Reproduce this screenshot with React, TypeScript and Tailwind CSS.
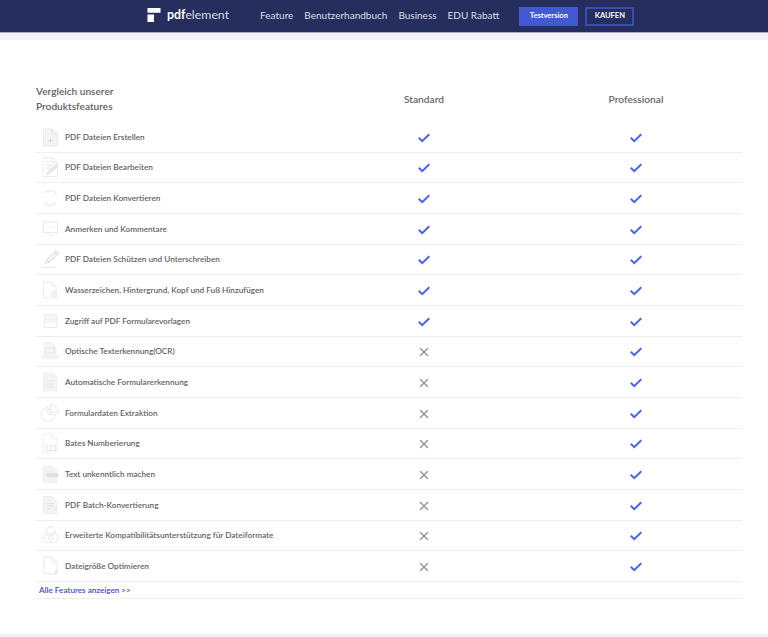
import { X } from 'lucide-react';
import type { ReactNode } from 'react';

const icons: Record<string, ReactNode> = {
  create: (
    <>
      <path d="M5.500 4h9l5 5v12h-14z" fill="#f4f4f4" stroke="#ececec" />
      <path d="M14.500 4v5h5" stroke="#e6e6e6" />
      <path d="M12.500 13v5M10 15.500h5" stroke="#dedede" />
    </>
  ),
  edit: (
    <>
      <path d="M5 2.500h9.500l5 5v14H5z" stroke="#eaeaea" />
      <path d="M14.500 2.500v5h5" stroke="#e6e6e6" />
      <path d="M7.500 7h5M7.500 10h8M7.500 13h5" stroke="#e4e4e4" />
      <path d="M8 20l1-3.500 9.500-8 2.500 2.500-9.500 8z" fill="#e8e8e8" />
    </>
  ),
  convert: <path d="M6.500 7.500a7.500 7.500 0 0 1 12 0M18.500 16.500a7.500 7.500 0 0 1-12 0M5 11.500v1M20 11.500v1" stroke="#e8e8e8" strokeWidth="1.1" />,
  comment: (
    <>
      <path d="M5.500 5h14v10.500h-5.500l-2 3v-3H5.500z" stroke="#e8e8e8" />
      <path d="M9.500 10h1M12 10h1M14.500 10h1" stroke="#dcdcdc" />
    </>
  ),
  sign: (
    <>
      <path d="M7 16.500l1.500-4L18 3.500l3 3-9.500 9z" fill="#f2f2f2" stroke="#e2e2e2" />
      <path d="M9 13l2.500 2.500M16.500 5l3 3" stroke="#dcdcdc" />
      <path d="M4 20.500h14" stroke="#e8e8e8" />
    </>
  ),
  watermark: (
    <>
      <path d="M5.500 4h8l4.500 4.500v11.500h-12.500z" stroke="#ececec" />
      <path d="M13.500 4v4.500h4.500" stroke="#ececec" />
      <path d="M13 14h6M13 16h6M13 18h6" stroke="#e6e6e6" />
    </>
  ),
  forms: (
    <>
      <rect x="6.500" y="5.500" width="12.500" height="5.500" fill="#f5f5f5" stroke="#ebebeb" />
      <rect x="6.500" y="13" width="12.500" height="5.500" stroke="#ebebeb" />
    </>
  ),
  ocr: (
    <>
      <path d="M6 4h8l4 4v9H6z" fill="#f6f6f6" stroke="#efefef" />
      <rect x="7.500" y="9" width="9" height="5" stroke="#e6e6e6" />
      <path d="M4 16h16v4H4z" fill="#f2f2f2" />
    </>
  ),
  recognition: (
    <>
      <path d="M5.500 3h9l4.500 4.500V21H5.500z" fill="#f4f4f4" stroke="#efefef" />
      <path d="M9 11h7M9 14h7M9 17h7" stroke="#e4e4e4" />
    </>
  ),
  extract: (
    <>
      <path d="M10 6.500a7 7 0 1 0 7 7h-7z" stroke="#e8e8e8" />
      <path d="M12.500 3.500a8 8 0 0 1 8 8h-8z" stroke="#e8e8e8" />
    </>
  ),
  bates: (
    <>
      <path d="M5 3h9l5 5v13H5z" stroke="#f0f0f0" />
      <path d="M14 3v5h5" stroke="#f0f0f0" />
      <text x="6.500" y="20" fontSize="7" fill="#e0e0e0" fontFamily="Lato, sans-serif">123</text>
    </>
  ),
  redact: (
    <>
      <path d="M5.500 4h8.500l4.500 4.500v12h-13z" fill="#f2f2f2" stroke="#eeeeee" />
      <rect x="9" y="11.500" width="11.500" height="3.500" fill="#dedede" />
    </>
  ),
  batch: (
    <>
      <path d="M5.500 3.500h8.500l4.500 4.500v12.500h-13z" fill="#f4f4f4" stroke="#eeeeee" />
      <path d="M9 10.500h6.500M9 13h6.500M9 15.500h4" stroke="#e2e2e2" />
      <path d="M15 15.500l1.500 1.500 3-3" stroke="#e2e2e2" />
    </>
  ),
  compat: (
    <>
      <circle cx="12.800" cy="8.500" r="4.500" stroke="#e8e8e8" />
      <circle cx="10" cy="15" r="4.800" stroke="#e8e8e8" />
      <circle cx="15.500" cy="15" r="4.800" stroke="#e8e8e8" />
    </>
  ),
  optimize: (
    <>
      <path d="M6 3h8l5 5v9h-2v3H6z" stroke="#e8e8e8" />
      <path d="M14 3v5h5" stroke="#e8e8e8" />
      <path d="M18 17v3.500M16.300 19H20" stroke="#e2e2e2" />
    </>
  ),
};

const features = [
  { icon: 'create', label: 'PDF Dateien Erstellen', standard: true },
  { icon: 'edit', label: 'PDF Dateien Bearbeiten', standard: true },
  { icon: 'convert', label: 'PDF Dateien Konvertieren', standard: true },
  { icon: 'comment', label: 'Anmerken und Kommentare', standard: true },
  { icon: 'sign', label: 'PDF Dateien Schützen und Unterschreiben', standard: true },
  { icon: 'watermark', label: 'Wasserzeichen, Hintergrund, Kopf und Fuß Hinzufügen', standard: true },
  { icon: 'forms', label: 'Zugriff auf PDF Formularevorlagen', standard: true },
  { icon: 'ocr', label: 'Optische Texterkennung(OCR)', standard: false },
  { icon: 'recognition', label: 'Automatische Formularerkennung', standard: false },
  { icon: 'extract', label: 'Formulardaten Extraktion', standard: false },
  { icon: 'bates', label: 'Bates Numberierung', standard: false },
  { icon: 'redact', label: 'Text unkenntlich machen', standard: false },
  { icon: 'batch', label: 'PDF Batch-Konvertierung', standard: false },
  { icon: 'compat', label: 'Erweiterte Kompatibilitätsunterstützung für Dateiformate', standard: false },
  { icon: 'optimize', label: 'Dateigröße Optimieren', standard: false },
];

function Mark({ yes }: { yes: boolean }) {
  return yes ? (
    <svg viewBox="0 0 12 10" fill="none" className="mt-[2px] h-[10px] w-[12px] stroke-[#4a62ee] stroke-[2]">
      <path d="M.8 4.800l3.400 3.400L11.300 1.200" />
    </svg>
  ) : (
    <X className="mt-[2px] size-[14px] text-[#9a9a9a]" strokeWidth={2.6} />
  );
}

function FeatureRow({ icon, label, standard }: { icon: string; label: string; standard: boolean }) {
  return (
    <div className="grid h-[30.67px] grid-cols-[282px_212px_212px] items-center border-b border-[#eeeeee]">
      <div className="flex items-center">
        <svg viewBox="0 0 24 24" fill="none" className="ml-[2px] size-[24px] shrink-0">
          {icons[icon]}
        </svg>
        <span className="ml-[3px] whitespace-nowrap text-[8.200px] font-semibold text-[#5f5f66]">{label}</span>
      </div>
      <div className="flex justify-center"><Mark yes={standard} /></div>
      <div className="flex justify-center"><Mark yes /></div>
    </div>
  );
}

export default function App() {
  return (
    <div className="flex h-[637px] flex-col overflow-hidden bg-white font-['Lato','Liberation_Sans',sans-serif]">
      <header className="flex h-[33px] shrink-0 items-center border-b border-[#a9afc4] bg-[#262e5e]">
        <div className="ml-[147px] flex items-center pb-[2px]">
          <svg viewBox="0 0 14 15" className="size-[14px] fill-white">
            <path d="M0 0h14v5H0zM0 7h7v8H0z" />
          </svg>
          <span className="ml-[6px] text-[12.300px] leading-none text-[#d8dae4]">
            <span className="font-bold text-white">pdf</span>element
          </span>
        </div>
        <nav className="ml-[31px] flex items-center gap-[11px] pb-[2px] text-[10px] text-[#dcdee8]">
          <span>Feature</span>
          <span>Benutzerhandbuch</span>
          <span>Business</span>
          <span>EDU Rabatt</span>
        </nav>
        <button className="ml-[20px] h-[19px] w-[59px] bg-[#4359d4] text-[7.500px] font-bold text-white">Testversion</button>
        <button className="ml-[7px] h-[19px] w-[49px] border-2 border-[#3a4ab8] text-[7.500px] font-bold text-white">KAUFEN</button>
      </header>
      <div className="h-[7px] shrink-0 bg-[#f5f5f5]" />

      <main className="ml-9 mt-[40px] w-[706px]">
        <div className="grid h-[39px] grid-cols-[282px_212px_212px] items-center">
          <h2 className="pb-[2px] text-[10.100px] font-semibold leading-[15px] text-[#5f5f66]">
            Vergleich unserer<br />Produktsfeatures
          </h2>
          <div className="text-center text-[10.200px] font-semibold text-[#66666c]">Standard</div>
          <div className="text-center text-[10.200px] font-semibold text-[#66666c]">Professional</div>
        </div>
        <div className="h-[3px]" />
        {features.map((f) => (
          <FeatureRow key={f.label} icon={f.icon} label={f.label} standard={f.standard} />
        ))}
        <div className="flex h-[17.500px] items-center border-b border-[#eeeeee] pl-[3px] text-[8.150px] font-semibold text-[#3f4fb8]">
          Alle Features anzeigen &gt;&gt;
        </div>
      </main>
      <div className="mt-auto h-[3px] bg-[#f1f1f1]" />
    </div>
  );
}
